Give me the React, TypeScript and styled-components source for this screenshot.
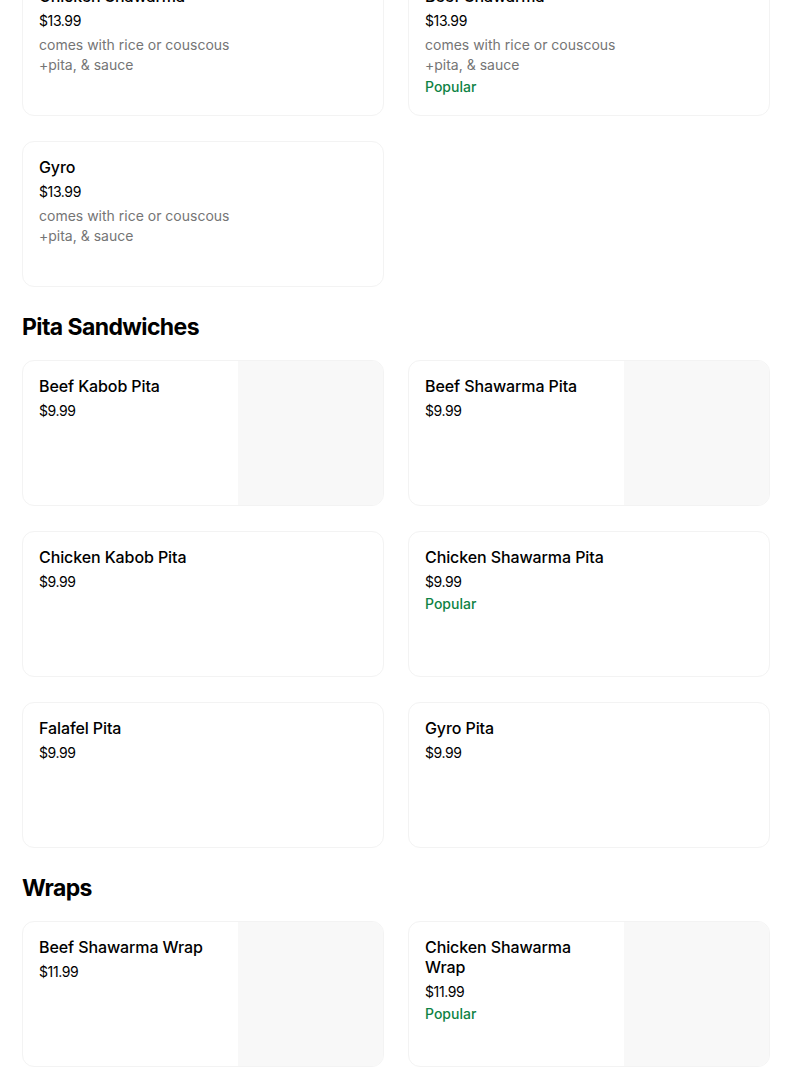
import React from 'react';
import styled, { createGlobalStyle } from 'styled-components';

type MenuItem = {
  name: string;
  price: string;
  description?: string[];
  popular?: boolean;
  image?: boolean;
};

type Section = {
  title?: string;
  items: MenuItem[];
};

const desc = ['comes with rice or couscous', '+pita, & sauce'];

const sections: Section[] = [
  {
    items: [
      { name: 'Chicken Shawarma', price: '$13.99', description: desc },
      { name: 'Beef Shawarma', price: '$13.99', description: desc, popular: true },
      { name: 'Gyro', price: '$13.99', description: desc },
    ],
  },
  {
    title: 'Pita Sandwiches',
    items: [
      { name: 'Beef Kabob Pita', price: '$9.99', image: true },
      { name: 'Beef Shawarma Pita', price: '$9.99', image: true },
      { name: 'Chicken Kabob Pita', price: '$9.99' },
      { name: 'Chicken Shawarma Pita', price: '$9.99', popular: true },
      { name: 'Falafel Pita', price: '$9.99' },
      { name: 'Gyro Pita', price: '$9.99' },
    ],
  },
  {
    title: 'Wraps',
    items: [
      { name: 'Beef Shawarma Wrap', price: '$11.99', image: true },
      { name: 'Chicken Shawarma Wrap', price: '$11.99', popular: true, image: true },
    ],
  },
];

const GlobalStyle = createGlobalStyle`
  body {
    margin: 0;
    background: #fff;
    font-family: Inter, "Liberation Sans", sans-serif;
    color: #000;
    overflow: hidden;
  }
`;

const App = () => (
  <>
    <GlobalStyle />
    <Page>
      {sections.map((section, i) => (
        <SectionBlock key={i}>
          {section.title && <SectionTitle>{section.title}</SectionTitle>}
          <Grid>
            {section.items.map((item) => (
              <Card key={item.name}>
                <Info $withImage={!!item.image}>
                  <Name>{item.name}</Name>
                  <Price>{item.price}</Price>
                  {item.description && (
                    <Description>
                      {item.description.map((line) => (
                        <div key={line}>{line}</div>
                      ))}
                    </Description>
                  )}
                  {item.popular && <Popular>Popular</Popular>}
                </Info>
                {item.image && <Thumb />}
              </Card>
            ))}
          </Grid>
        </SectionBlock>
      ))}
    </Page>
  </>
);

const Page = styled.div`
  margin-top: -30px;
  padding: 0 34px 40px 22px;
  display: flex;
  flex-direction: column;
  gap: 24px;
`;

const SectionBlock = styled.section`
  display: flex;
  flex-direction: column;
`;

const SectionTitle = styled.h2`
  margin: 0 0 17px;
  font-size: 23px;
  line-height: 32px;
  font-weight: 700;
  letter-spacing: -0.6px;
`;

const Grid = styled.div`
  display: grid;
  grid-template-columns: 1fr 1fr;
  column-gap: 24px;
  row-gap: 25px;
`;

const Card = styled.div`
  height: 146px;
  box-sizing: border-box;
  border: 1px solid #f3f3f3;
  border-radius: 12px;
  display: flex;
  overflow: hidden;
  background: #fff;
`;

const Info = styled.div<{ $withImage: boolean }>`
  flex: 1;
  min-width: 0;
  padding: 15px ${(p) => (p.$withImage ? '24px' : '16px')} 16px 16px;
  display: flex;
  flex-direction: column;
`;

const Name = styled.div`
  font-size: 16px;
  line-height: 20px;
  font-weight: 500;
  letter-spacing: -0.1px;
  color: #000;
`;

const Price = styled.div`
  margin-top: 5px;
  font-size: 14px;
  line-height: 20px;
  letter-spacing: -0.4px;
  color: #000;
`;

const Description = styled.div`
  margin-top: 4px;
  font-size: 14px;
  line-height: 20px;
  color: #757575;
`;

const Popular = styled.div`
  margin-top: 2px;
  font-size: 14px;
  line-height: 20px;
  font-weight: 500;
  color: #0e8345;
`;

const Thumb = styled.div`
  width: 145px;
  flex-shrink: 0;
  background: #f8f8f8;
`;

export default App;
